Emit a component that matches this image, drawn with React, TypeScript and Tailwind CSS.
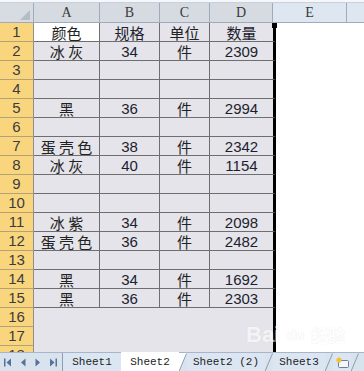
import React from "react";

type Row = [string, string, string, string];

const rows: Row[] = [
  ["颜色", "规格", "单位", "数量"],
  ["冰 灰", "34", "件", "2309"],
  ["", "", "", ""],
  ["", "", "", ""],
  ["黑", "36", "件", "2994"],
  ["", "", "", ""],
  ["蛋 壳 色", "38", "件", "2342"],
  ["冰 灰", "40", "件", "1154"],
  ["", "", "", ""],
  ["", "", "", ""],
  ["冰 紫", "34", "件", "2098"],
  ["蛋 壳 色", "36", "件", "2482"],
  ["", "", "", ""],
  ["黑", "34", "件", "1692"],
  ["黑", "36", "件", "2303"],
];

const cjk = "font-['Noto_Sans_CJK_SC',sans-serif]";
const num = "font-['Liberation_Sans',Arial,sans-serif]";

function NavButtons() {
  return (
    <div className="flex h-full w-[62px] items-center gap-[7px] pl-[4px] text-[#54729a]">
      <svg width="8" height="9" viewBox="0 0 8 9">
        <rect x="0" y="0.5" width="1.5" height="8" fill="currentColor" />
        <path d="M7 0.5 L2.5 4.5 L7 8.5 Z" fill="currentColor" />
      </svg>
      <svg width="8" height="9" viewBox="0 0 8 9">
        <path d="M6.5 0.5 L2 4.5 L6.5 8.5 Z" fill="currentColor" />
      </svg>
      <svg width="8" height="9" viewBox="0 0 8 9">
        <path d="M1.5 0.5 L6 4.5 L1.5 8.5 Z" fill="currentColor" />
      </svg>
      <svg width="8" height="9" viewBox="0 0 8 9">
        <path d="M1 0.5 L5.5 4.5 L1 8.5 Z" fill="currentColor" />
        <rect x="6.5" y="0.5" width="1.5" height="8" fill="currentColor" />
      </svg>
    </div>
  );
}

function Slant({ white }: { white?: boolean }) {
  return (
    <svg width="8" height="19" viewBox="0 0 8 19" className="shrink-0">
      {white && <path d="M0 0 L8 0 L0 19 Z" fill="#ffffff" />}
      <path d="M0 18.5 L7.5 0.5" stroke="#8d9db2" strokeWidth="1" fill="none" />
    </svg>
  );
}

function Tabs() {
  return (
    <div className="flex h-[19px] shrink-0 items-stretch border-t border-[#a7b6c8] bg-[#d9e3ee] font-['Liberation_Mono',monospace] text-[11px] text-[#222]">
      <NavButtons />
      <div className="flex w-[59px] items-center justify-center border-l border-[#8d9db2] bg-[#dce6f2]">Sheet1</div>
      <div className="-mt-px flex w-[58px] items-center justify-center border-t border-white bg-white">Sheet2</div>
      <Slant white />
      <div className="flex w-[78px] items-center justify-center bg-[#dce6f2] whitespace-pre">Sheet2 (2)</div>
      <Slant />
      <div className="flex w-[52px] items-center justify-center bg-[#dce6f2]">Sheet3</div>
      <Slant />
      <div className="flex w-[18px] items-center justify-center bg-[#dce6f2]">
        <svg width="15" height="13" viewBox="0 0 15 13">
          <rect x="3.5" y="4.5" width="10" height="7" rx="1" fill="#f4f6fa" stroke="#6d7f98" />
          <circle cx="4" cy="4" r="2.6" fill="#f2c230" />
        </svg>
      </div>
      <Slant />
      <div className="flex-1" />
    </div>
  );
}

export default function App() {
  const extra = [16, 17, 18];
  return (
    <div className="relative flex h-[371px] w-[364px] flex-col overflow-hidden bg-white">
      <div className="flex-1 overflow-hidden">
        {/* top strip */}
        <div className="h-[3px] border-b border-[#c8d0da] bg-[#f5f7fa]" />

        {/* column headers */}
        <div className="flex h-[20px] border-b border-[#9eabbb] font-['Liberation_Serif',serif] text-[14px] text-[#3a3a3a]">
          <div className="relative w-[34px] border-r border-[#9eabbb] bg-[#d7dce2]">
            <svg width="10" height="10" viewBox="0 0 10 10" className="absolute bottom-[2px] right-[3px]">
              <path d="M10 0 L10 10 L0 10 Z" fill="#b4bcc6" />
            </svg>
          </div>
          <div className="flex w-[66px] items-center justify-center border-r border-[#9eabbb] bg-[#d6dbe1]">A</div>
          <div className="flex w-[60px] items-center justify-center border-r border-[#9eabbb] bg-[#d6dbe1]">B</div>
          <div className="flex w-[50px] items-center justify-center border-r border-[#9eabbb] bg-[#d6dbe1]">C</div>
          <div className="flex w-[63px] items-center justify-center border-r border-[#9eabbb] bg-[#d6dbe1]">D</div>
          <div className="flex w-[74px] items-center justify-center border-r border-[#9eabbb] bg-[#dde6f1]">E</div>
          <div className="flex-1 bg-[#dde6f1]" />
        </div>

        {/* data rows */}
        {rows.map((r, i) => (
          <div key={i} className="flex h-[19px]">
            <div className={`flex w-[34px] items-center justify-center border-r border-b border-r-[#8f8f8f] border-b-[#b2a276] bg-[#f9d67e] ${num} text-[15px] font-light text-[#3c3c3c]`}>
              {i + 1}
            </div>
            <div className={`flex w-[66px] items-center justify-center border-r border-b border-[#6e6e6e] ${i === 0 ? "bg-white" : "bg-[#e4e4ea]"} ${cjk} text-[15px] leading-none text-[#222]`}>
              <span className="whitespace-pre">{r[0]}</span>
            </div>
            <div className={`flex w-[60px] items-center justify-center border-r border-b border-[#6e6e6e] bg-[#e4e4ea] ${i === 0 ? cjk : num} text-[15px] leading-none text-[#1e1e2e]`}>
              {r[1]}
            </div>
            <div className={`flex w-[50px] items-center justify-center border-r border-b border-[#6e6e6e] bg-[#e4e4ea] ${cjk} text-[15px] leading-none text-[#222]`}>
              {r[2]}
            </div>
            <div className={`relative flex w-[66px] items-center justify-center border-b border-b-[#6e6e6e] border-r-[3px] border-r-black bg-[#e4e4ea] ${i === 0 ? cjk : num} text-[15px] leading-none text-[#1e1e2e]`}>
              {r[3]}
              {i === 0 && <div className="absolute right-[-4px] top-0 h-[5px] w-[5px] bg-black" />}
            </div>
            <div className="w-[71px] bg-white" />
            <div className="flex-1 bg-white" />
          </div>
        ))}

        {/* empty rows below data */}
        {extra.map((n) => (
          <div key={n} className="flex h-[19px]">
            <div className={`flex w-[34px] items-start justify-center border-r border-b border-r-[#8f8f8f] border-b-[#b2a276] bg-[#f9d67e] ${num} text-[15px] leading-[18px] font-light text-[#3c3c3c]`}>
              {n}
            </div>
            <div className="w-[242px] border-r-[3px] border-black bg-[#e4e4ea]" />
            <div className="flex-1 bg-white" />
          </div>
        ))}
      </div>

      <Tabs />

      {/* watermark */}
      <div className="pointer-events-none absolute left-[246px] top-[318px] flex items-center gap-[3px] font-['Liberation_Sans',sans-serif] text-[22px] font-bold text-white opacity-60 [text-shadow:0_0_1px_#cfcfcf]">
        <span>Bai</span>
        <span className="rounded-full border-2 border-white px-[2px] text-[14px] leading-none">du</span>
        <span className={`${cjk} text-[17px]`}>经验</span>
      </div>
    </div>
  );
}
